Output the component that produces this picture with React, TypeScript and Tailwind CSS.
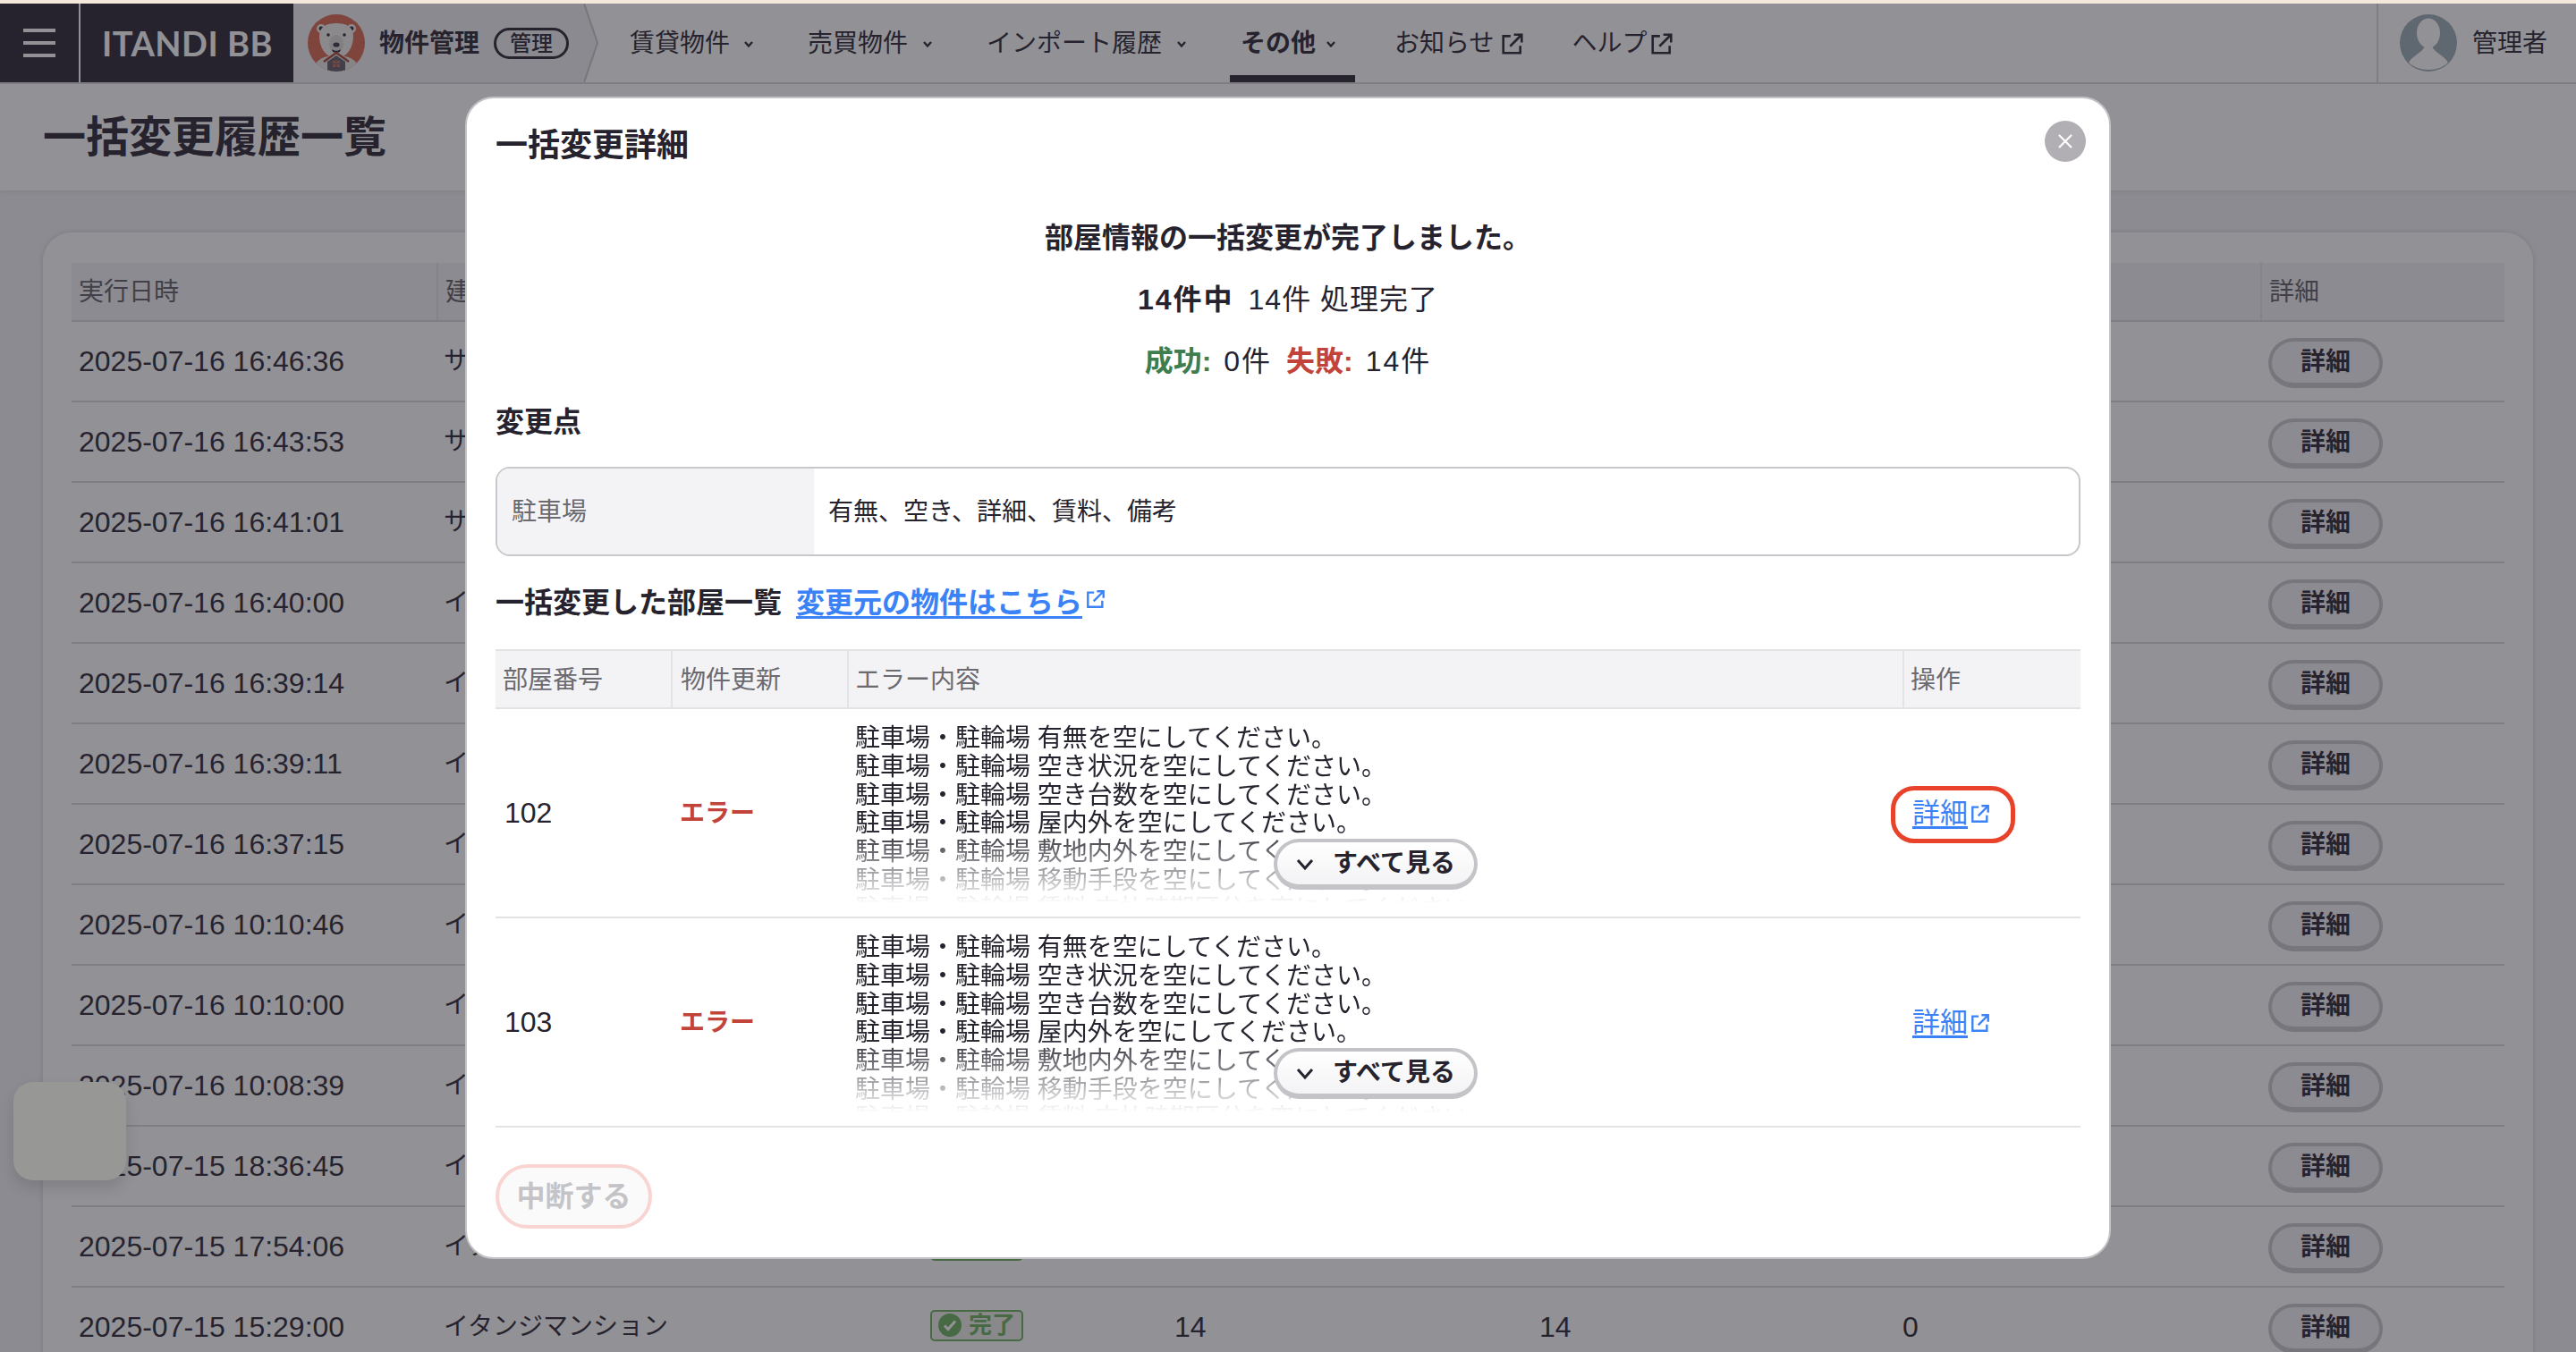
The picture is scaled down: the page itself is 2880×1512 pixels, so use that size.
import React from "react";

const ExtIcon = ({ size = 24, color = "currentColor", sw = 2.4 }: { size?: number; color?: string; sw?: number }) => (
  <svg width={size} height={size} viewBox="0 0 24 24" fill="none" stroke={color} strokeWidth={sw} className="shrink-0">
    <path d="M10 4H2.5v17.5H20V14" />
    <path d="M9.5 14.5L21 3" />
    <path d="M13.5 2.5h8v8" />
  </svg>
);

const Caret = () => (
  <svg width="12" height="12" viewBox="0 0 12 12" fill="none" stroke="#26232e" strokeWidth="2.4" className="shrink-0">
    <path d="M2 4l4 4.5L10 4" />
  </svg>
);

const Bear = () => (
  <svg width="64" height="64" viewBox="0 0 64 64" className="shrink-0">
    <defs>
      <clipPath id="bc"><circle cx="32" cy="32" r="32" /></clipPath>
    </defs>
    <g clipPath="url(#bc)">
      <rect width="64" height="64" fill="#d9644b" />
      <path d="M6 64c1-12 10-18 26-18s25 6 26 18z" fill="#e8e6e2" />
      <circle cx="15" cy="16" r="5" fill="#f1efea" />
      <circle cx="49" cy="16" r="5" fill="#f1efea" />
      <circle cx="15" cy="16" r="2.4" fill="#26232e" />
      <circle cx="49" cy="16" r="2.4" fill="#26232e" />
      <path d="M13 24c0-10 8-14 19-14s19 4 19 14c0 14-8 25-19 25S13 38 13 24z" fill="#f1efea" />
      <circle cx="23" cy="23" r="1.8" fill="#26232e" />
      <circle cx="41" cy="23" r="1.8" fill="#26232e" />
      <ellipse cx="32" cy="33" rx="8" ry="10" fill="#dcdad6" />
      <ellipse cx="32" cy="34" rx="3.6" ry="2.6" fill="#3a3640" />
      <path d="M27 39c3 2.4 7 2.4 10 0l-1 3c-2 1-6 1-8 0z" fill="#26232e" />
      <path d="M18 53l14-10 14 10" fill="none" stroke="#a5432f" strokeWidth="2.6" />
      <path d="M22 53l10-7 10 7v11H22z" fill="#5f5a66" />
      <rect x="28" y="52" width="8" height="7" fill="#c56b57" />
      <path d="M32 52v7M28 55.5h8" stroke="#5f5a66" strokeWidth="1" />
    </g>
  </svg>
);

const UserAvatar = () => (
  <svg width="64" height="64" viewBox="0 0 64 64" className="shrink-0">
    <circle cx="32" cy="32" r="32" fill="#98adb2" />
    <ellipse cx="32" cy="21" rx="13" ry="16.5" fill="#ffffff" />
    <path d="M10 54c4-8 14-10 18-18h8c4 8 14 10 18 18-5 5-13 8-22 8s-17-3-22-8z" fill="#ffffff" />
  </svg>
);

const Badge = () => (
  <span className="inline-flex h-[35px] w-[104px] items-center justify-center gap-[8px] rounded-[5px] border-2 border-[#68b05c] bg-[#ecefe9] text-[26px] font-bold text-[#68b05c]">
    <svg width="26" height="26" viewBox="0 0 26 26" className="shrink-0">
      <circle cx="13" cy="13" r="13" fill="#68b05c" />
      <path d="M7 13.5l4 4 8-9" fill="none" stroke="#ffffff" strokeWidth="3" />
    </svg>
    完了
  </span>
);

const rows = [
  ["2025-07-16 16:46:36", "サンプルマンション"],
  ["2025-07-16 16:43:53", "サンプルマンション"],
  ["2025-07-16 16:41:01", "サンプルマンション"],
  ["2025-07-16 16:40:00", "イタンジマンション"],
  ["2025-07-16 16:39:14", "イタンジマンション"],
  ["2025-07-16 16:39:11", "イタンジマンション"],
  ["2025-07-16 16:37:15", "イタンジマンション"],
  ["2025-07-16 10:10:46", "イタンジマンション"],
  ["2025-07-16 10:10:00", "イタンジマンション"],
  ["2025-07-16 10:08:39", "イタンジマンション"],
  ["2025-07-15 18:36:45", "イタンジマンション"],
  ["2025-07-15 17:54:06", "イタンジマンション"],
  ["2025-07-15 15:29:00", "イタンジマンション"],
];

const errors = [
  "駐車場・駐輪場 有無を空にしてください。",
  "駐車場・駐輪場 空き状況を空にしてください。",
  "駐車場・駐輪場 空き台数を空にしてください。",
  "駐車場・駐輪場 屋内外を空にしてください。",
  "駐車場・駐輪場 敷地内外を空にしてください。",
  "駐車場・駐輪場 移動手段を空にしてください。",
  "駐車場・駐輪場 賃料 支払時期区分を空にしてください。",
];

const RoomRow = ({ no, marked }: { no: string; marked?: boolean }) => (
  <div className="grid h-[234px] grid-cols-[196px_197px_1180px_199px] border-b-2 border-[#e3e3e6] text-[28px] text-[#26232e]">
    <div className="flex items-center pl-[10px] text-[32px]">{no}</div>
    <div className="flex items-center pl-[10px] pt-[2px] font-bold text-[#c2433a]">エラー</div>
    <div className="relative pl-[9px] pt-[17px]">
      <div className="h-[200px] overflow-hidden leading-[31.8px] [mask-image:linear-gradient(to_bottom,#000_58%,#0000_100%)]">
        {errors.map((e) => (
          <div key={e} className="whitespace-nowrap">{e}</div>
        ))}
      </div>
      <button className="absolute left-[477px] top-[145px] flex h-[57px] w-[228px] items-center gap-[20px] rounded-full border-[4px] border-b-[6px] border-[#c4c4c8] bg-gradient-to-b from-white to-[#f3f3f5] pl-[20px] text-[28px] font-bold text-[#26232e]">
        <svg width="22" height="22" viewBox="0 0 22 22" fill="none" stroke="#26232e" strokeWidth="3" className="shrink-0">
          <path d="M3 7l8 9 8-9" />
        </svg>
        すべて見る
      </button>
    </div>
    <div className="flex items-center pl-[11px] pt-[2px]">
      <a className="relative inline-flex items-center gap-[3px] text-[31px] text-[#3b82f6]">
        <span className="underline underline-offset-[4px]">詳細</span>
        <ExtIcon size={22} color="#3b82f6" sw={2.6} />
        {marked && (
          <span className="absolute -left-[24px] -right-[28px] top-[calc(50%+1px)] h-[64px] -translate-y-1/2 rounded-[26px] border-[5px] border-[#e8432a]" />
        )}
      </a>
    </div>
  </div>
);

export default function App() {
  return (
    <div className="relative h-[1512px] w-[2880px] overflow-hidden bg-[#f3f3f5] font-['Liberation_Sans','Noto_Sans_CJK_JP',sans-serif] text-[#26232e]">
      {/* page */}
      <div className="h-[4px] bg-white" />
      <nav className="flex h-[90px] border-b-2 border-[#d8d8dc] bg-white">
        <div className="flex w-[328px] bg-[#26232e]">
          <div className="flex w-[90px] flex-col items-center justify-center gap-[10px] border-r-2 border-white">
            <span className="h-[4px] w-[36px] bg-white" />
            <span className="h-[4px] w-[36px] bg-white" />
            <span className="h-[4px] w-[36px] bg-white" />
          </div>
          <div className="flex flex-1 items-center pl-[24px] font-['Lato',sans-serif] text-[38px] font-bold tracking-[0.5px] text-white">
            ITANDI BB
          </div>
        </div>
        <div className="flex w-[325px] items-center gap-[16px] bg-[#f0f0f2] pl-[16px]">
          <Bear />
          <span className="pt-[2px] text-[28px] font-bold">物件管理</span>
          <span className="flex h-[35px] w-[84px] items-center justify-center rounded-full border-[3px] border-[#26232e] pt-[1px] text-[24px] font-medium">
            管理
          </span>
        </div>
        <svg width="16" height="88" viewBox="0 0 16 88" className="shrink-0 bg-white">
          <path d="M0 0L15 44L0 88z" fill="#f0f0f2" />
          <path d="M0 0L15 44L0 88" fill="none" stroke="#c8c8cc" strokeWidth="2" />
        </svg>
        <div className="flex h-full flex-1 items-center text-[28px]">
          <span className="ml-[35px] flex items-center gap-[15px] pt-[2px]">賃貸物件 <Caret /></span>
          <span className="ml-[60px] flex items-center gap-[16px] pt-[2px]">売買物件 <Caret /></span>
          <span className="ml-[60px] flex items-center gap-[16px] pt-[2px]">インポート履歴 <Caret /></span>
          <span className="relative ml-[60px] flex h-full items-center gap-[11px] pt-[2px] font-bold">
            その他 <Caret />
            <span className="absolute -left-[12px] -right-[21px] bottom-0 h-[8px] bg-[#26232e]" />
          </span>
          <span className="ml-[65px] flex items-center gap-[7px] pt-[2px]">お知らせ <ExtIcon size={26} /></span>
          <span className="ml-[54px] flex items-center gap-[3px] pt-[2px]">ヘルプ <ExtIcon size={26} /></span>
        </div>
        <div className="flex w-[223px] items-center gap-[17px] border-l-2 border-[#d8d8dc] pl-[24px] text-[28px]">
          <UserAvatar />
          <span className="pt-[2px]">管理者</span>
        </div>
      </nav>
      <header className="flex h-[119px] items-center bg-white pl-[48px] text-[48px] font-bold shadow-[0_2px_4px_rgba(0,0,0,0.08)]">
        一括変更履歴一覧
      </header>
      <main className="mx-[48px] mt-[47px] rounded-t-[32px] bg-white px-[32px] pt-[34px] shadow-[0_0_6px_rgba(0,0,0,0.15)]">
        <div className="grid h-[66px] grid-cols-[408px_544px_273px_408px_406px_408px_273px] items-center border-b-2 border-[#d8d8dc] bg-[#f3f3f5] text-[28px] text-[#5d5c62]">
          {["実行日時", "建物名", "ステータス", "件数", "成功", "失敗", "詳細"].map((h) => (
            <div key={h} className="flex h-full items-center border-l-2 border-[#e3e3e6] pl-[8px] pt-[2px] first:border-l-0">{h}</div>
          ))}
        </div>
        {rows.map(([d, n]) => (
          <div key={d} className="grid h-[90px] grid-cols-[408px_544px_273px_408px_406px_408px_273px] items-center border-b-2 border-[#d8d8dc] text-[32px]">
            <div className="pl-[8px]">{d}</div>
            <div className="pl-[8px] text-[28px]">{n}</div>
            <div className="pl-[8px]"><Badge /></div>
            <div className="pl-[8px]">14</div>
            <div className="pl-[8px]">14</div>
            <div className="pl-[8px]">0</div>
            <div className="pl-[9px] pt-[3px]">
              <button className="flex h-[56px] w-[128px] items-center justify-center rounded-full border-[4px] border-b-[6px] border-[#c8c8cc] bg-[#f3f3f5] text-[28px] font-bold">詳細</button>
            </div>
          </div>
        ))}
      </main>

      {/* dim */}
      <div className="absolute inset-0 bg-[#26232e]/50" />
      <div className="absolute inset-x-0 top-0 h-[4px] bg-[#f4e7db]" />

      {/* floating widget */}
      <div className="absolute left-[15px] top-[1210px] h-[110px] w-[126px] rounded-[22px] bg-[#979896] shadow-[0_8px_16px_rgba(0,0,0,0.12)]" />

      {/* modal */}
      <div className="absolute left-[520px] top-[108px] h-[1300px] w-[1840px] rounded-[32px] border-2 border-[#c3c2c6] bg-white px-[32px] pt-[29px]">
        <h2 className="text-[36px] font-bold leading-[48px]">一括変更詳細</h2>
        <button className="absolute right-[26px] top-[25px] flex h-[46px] w-[46px] items-center justify-center rounded-full bg-[#b1afb4]">
          <svg width="20" height="20" viewBox="0 0 20 20" stroke="#ffffff" strokeWidth="2.2"><path d="M3 3l14 14M17 3L3 17" /></svg>
        </button>
        <div className="mt-[57px] flex flex-col items-center gap-[25px] text-[32px] leading-[44px]">
          <div className="font-bold">部屋情報の一括変更が完了しました。</div>
          <div className="flex gap-[16px]"><b className="tracking-[2px]">14件中</b><span className="tracking-[1px]">14件 処理完了</span></div>
          <div className="flex gap-[16px]">
            <span><b className="mr-[5px] text-[#3d7d4e]">成功:</b> <span className="tracking-[2px]">0件</span></span>
            <span><b className="mr-[5px] text-[#c2433a]">失敗:</b> <span className="tracking-[2px]">14件</span></span>
          </div>
        </div>
        <h3 className="mt-[24px] text-[32px] font-bold leading-[44px]">変更点</h3>
        <div className="mt-[28px] flex h-[100px] overflow-hidden rounded-[16px] border-2 border-[#c8c8cc] text-[28px]">
          <div className="flex w-[354px] items-center bg-[#f3f3f5] pl-[16px] pt-[2px] text-[#6b6a70]">駐車場</div>
          <div className="flex items-center pl-[16px] pt-[2px]">有無、空き、詳細、賃料、備考</div>
        </div>
        <div className="mt-[30px] flex items-center text-[32px] font-bold leading-[44px]">
          <span>一括変更した部屋一覧</span>
          <a className="ml-[16px] text-[#3b82f6] underline underline-offset-[4px]">変更元の物件はこちら</a>
          <span className="ml-[4px] -mt-[8px]"><ExtIcon size={22} color="#3b82f6" sw={2.6} /></span>
        </div>
        <div className="mt-[30px] grid h-[67px] grid-cols-[196px_197px_1180px_199px] border-y-2 border-[#e3e3e6] bg-[#f3f3f5] text-[28px] text-[#6b6a70]">
          <div className="flex items-center pl-[8px] pt-[2px]">部屋番号</div>
          <div className="flex items-center border-l-2 border-[#e3e3e6] pl-[9px] pt-[2px]">物件更新</div>
          <div className="flex items-center border-l-2 border-[#e3e3e6] pl-[7px] pt-[2px]">エラー内容</div>
          <div className="flex items-center border-l-2 border-[#e3e3e6] pl-[7px] pt-[2px]">操作</div>
        </div>
        <RoomRow no="102" marked />
        <RoomRow no="103" />
        <button className="mt-[41px] flex h-[72px] w-[175px] items-center justify-center rounded-full border-[4px] border-[#f8d5d2] bg-[#fafafa] text-[32px] font-bold text-[#c4c4c8]">
          中断する
        </button>
      </div>
    </div>
  );
}
